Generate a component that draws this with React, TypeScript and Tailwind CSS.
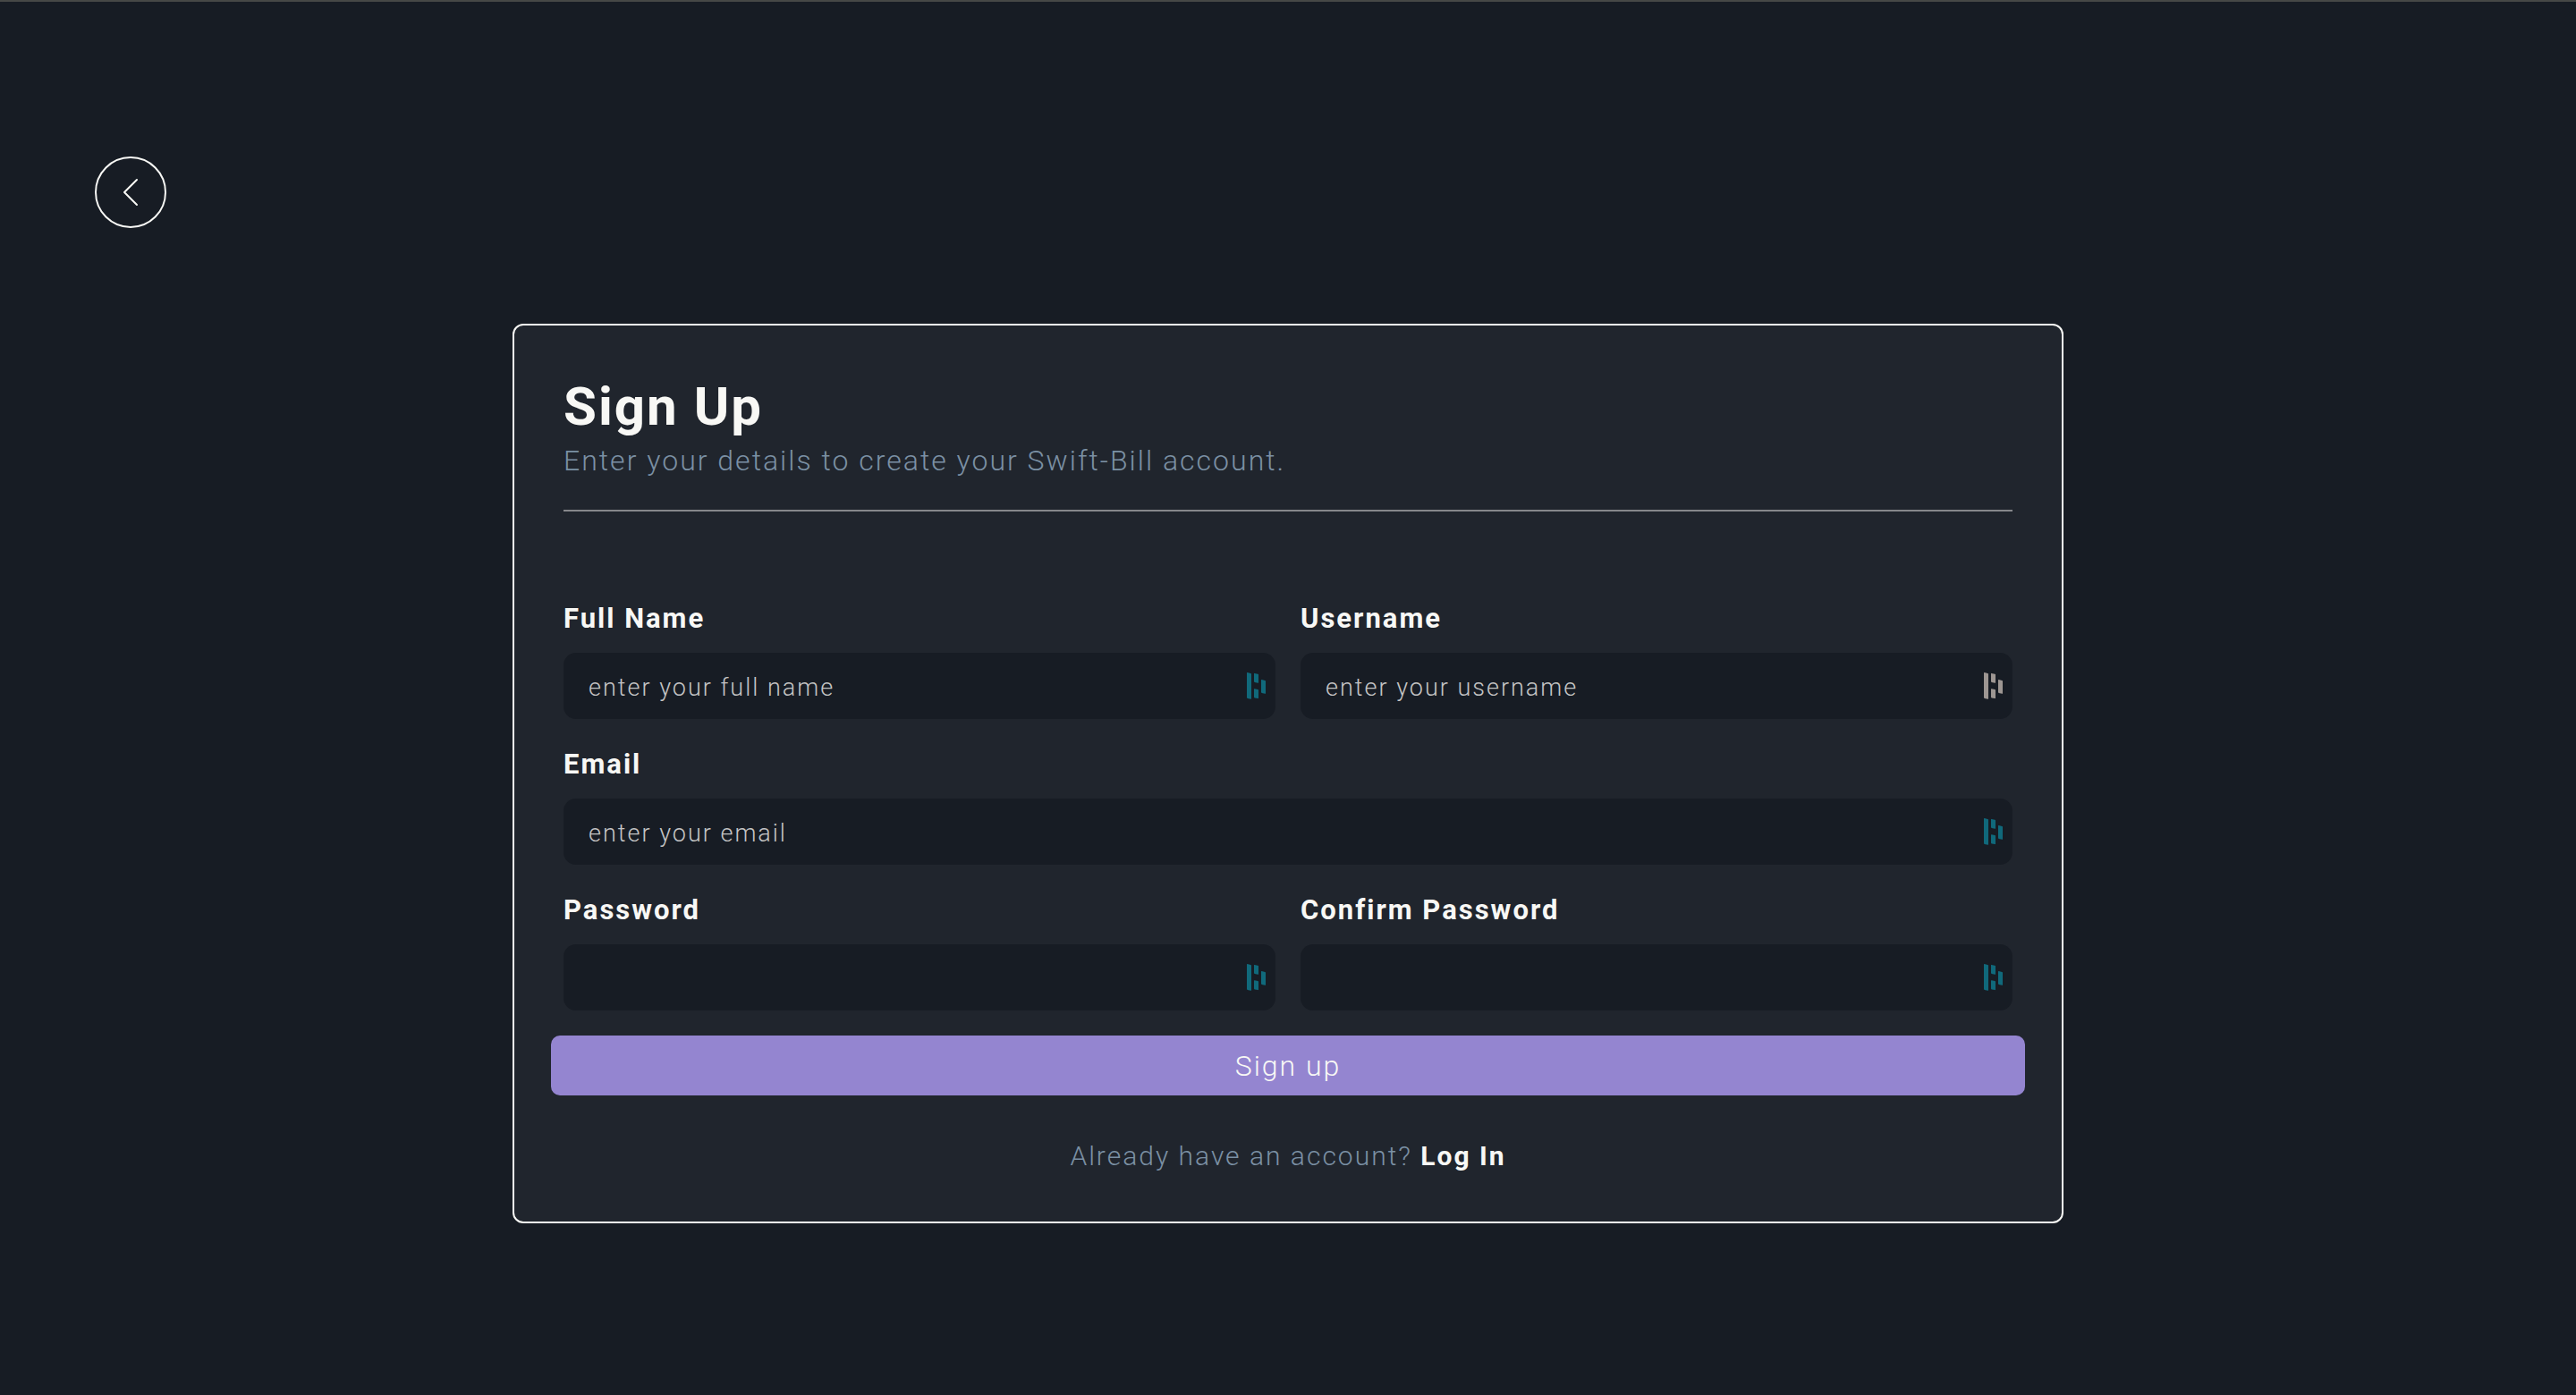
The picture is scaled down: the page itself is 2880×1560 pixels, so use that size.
type FieldProps = {
  id: string;
  label: string;
  type?: string;
  placeholder?: string;
  muted?: boolean;
  wide?: boolean;
};

function ManagerIcon({ muted = false }: { muted?: boolean }) {
  return (
    <svg
      viewBox="0 0 21 30"
      aria-hidden="true"
      className={`pointer-events-none absolute top-[22px] right-[11px] h-[30px] w-[21px] ${muted ? "text-[#9d9692]" : "text-[#10697b]"}`}
      fill="currentColor"
    >
      <path d="M0 .6Q0 0 .6.1L4.3.9Q5 1.1 5 1.8V29.3Q5 30 4.3 29.8L.7 29Q0 28.8 0 28.1Z" />
      <path d="M8 1.3Q8 .7 8.6.9L12.3 1.7Q13 1.9 13 2.6V11.3Q13 12 12.3 11.8L8.7 11Q8 10.8 8 10.1Z" />
      <path d="M8 18.8Q8 18.1 8.6 18.3L12.3 19.1Q13 19.3 13 20V28.6Q13 29.3 12.3 29.1L8.7 28.4Q8 28.2 8 27.5Z" />
      <path d="M16 8.6Q16 8 16.6 8.1L20.3 8.9Q21 9.1 21 9.8V23.3Q21 24 20.3 23.8L16.7 23Q16 22.8 16 22.1Z" />
    </svg>
  );
}

function Field({ id, label, type = "text", placeholder, muted, wide }: FieldProps) {
  return (
    <div className={wide ? "col-span-2" : ""}>
      <label htmlFor={id} className="mb-[15px] block text-[31px] leading-[46px] font-bold">
        {label}
      </label>
      <div className="relative">
        <input
          id={id}
          name={id}
          type={type}
          placeholder={placeholder}
          className="block h-[74px] w-full rounded-[14px] bg-[#171c24] pt-[3px] pr-12 pl-7 text-[27px] font-light tracking-[2px] outline-none placeholder:text-[#c4c4c4]"
        />
        <ManagerIcon muted={muted} />
      </div>
    </div>
  );
}

export default function App() {
  return (
    <main className="min-h-screen border-t-2 border-[#464846] bg-[#171c24] pt-[173px] pb-16 font-['Roboto',sans-serif] tracking-[2px] text-[#f8f8f5]">
      <button
        type="button"
        aria-label="Go back"
        className="ml-[106px] flex size-20 items-center justify-center rounded-full border-2 border-[#f8f8f5]"
      >
        <svg viewBox="0 0 18 32" className="h-8 w-[18px]" fill="none" stroke="currentColor" strokeWidth="2" strokeLinecap="round" strokeLinejoin="round" aria-hidden="true">
          <path d="M16 2L2 16L16 30" />
        </svg>
      </button>

      <section className="mx-auto mt-[107px] max-w-[1734px] rounded-[12px] border-2 border-[#f8f8f5] bg-[#20252d] px-[41px] pt-[55px] pb-[51px]">
        <header className="mx-[14px] border-b-2 border-[#86878b] pb-[31px]">
          <h1 className="text-[60px] leading-[72px] font-bold">Sign Up</h1>
          <p className="text-[32px] leading-[48px] font-light text-[#7b90a4]">
            Enter your details to create your Swift-Bill account.
          </p>
        </header>

        <form className="mt-[97px]" onSubmit={(e) => e.preventDefault()}>
          <div className="mx-[14px] grid grid-cols-2 gap-7">
            <Field id="fullName" label="Full Name" placeholder="enter your full name" />
            <Field id="username" label="Username" placeholder="enter your username" muted />
            <Field id="email" label="Email" type="email" placeholder="enter your email" wide />
            <Field id="password" label="Password" type="password" />
            <Field id="confirmPassword" label="Confirm Password" type="password" />
          </div>
          <button
            type="submit"
            className="mt-7 block h-[67px] w-full rounded-[10px] bg-[#9485d0] text-[32px] font-light tracking-[2px]"
          >
            Sign up
          </button>
        </form>

        <p className="mt-[45px] text-center text-[30px] leading-[45px] font-light text-[#7b90a4]">
          Already have an account?{" "}
          <a href="#login" className="font-bold text-[#f8f8f5]">
            Log In
          </a>
        </p>
      </section>
    </main>
  );
}
